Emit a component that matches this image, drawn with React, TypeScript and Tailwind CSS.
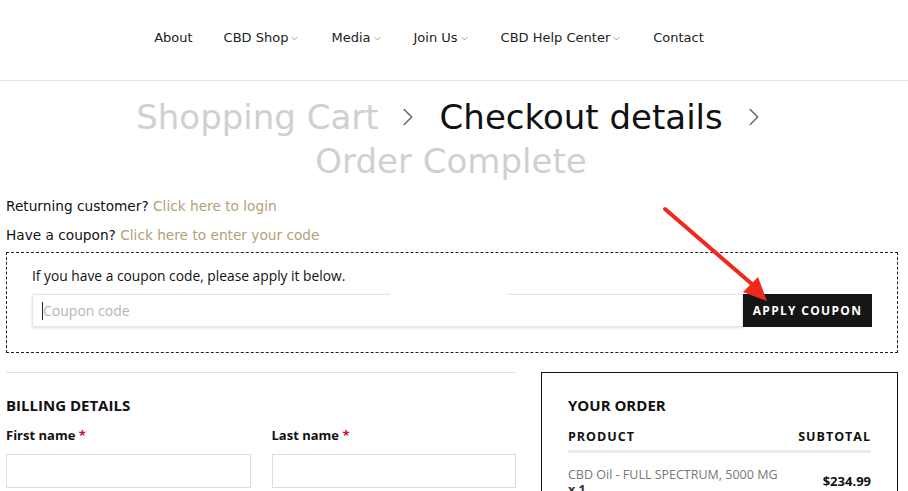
import React from 'react';
import { ChevronDown, ChevronRight } from 'lucide-react';

const navItems = [
  { label: 'About', drop: false },
  { label: 'CBD Shop', drop: true },
  { label: 'Media', drop: true },
  { label: 'Join Us', drop: true },
  { label: 'CBD Help Center', drop: true },
  { label: 'Contact', drop: false },
];

// --- RED ANNOTATION ARROW ---
const RedArrow = () => (
  <svg className="absolute left-[655px] top-[200px] pointer-events-none" width="130" height="110" viewBox="0 0 130 110">
    <line x1="10" y1="9" x2="98" y2="85" stroke="#f0281e" strokeWidth="4" strokeLinecap="round" />
    <polygon points="112,101 88,92 103,77" fill="#f0281e" />
  </svg>
);

export default function App() {
  return (
    <div className="relative min-h-screen bg-white text-[#111] font-['Open_Sans',sans-serif] overflow-hidden">
      {/* Header */}
      <header className="h-[81px] border-b border-[#e4e4e4] flex items-center justify-center pr-[52px] pb-[4px]">
        <nav className="flex items-center gap-[31px] text-[13px] text-[#222] font-['DejaVu_Sans',sans-serif] pl-[2px]">
          {navItems.map((item) => (
            <span key={item.label} className="flex items-center gap-[1px]">
              {item.label}
              {item.drop && <ChevronDown size={11} strokeWidth={1.3} className="text-[#666]" />}
            </span>
          ))}
        </nav>
      </header>

      {/* Breadcrumb */}
      <div className="pt-[14px] pr-[6px] flex flex-col items-center text-[34px] leading-[44px] font-['DejaVu_Sans',sans-serif]">
        <div className="flex items-center ml-[3px]">
          <span className="text-[#d0d0d0]">Shopping Cart</span>
          <ChevronRight size={30} strokeWidth={1.2} className="ml-[14px] mr-[17px] text-[#666]" />
          <span className="text-[#111]">Checkout details</span>
          <ChevronRight size={30} strokeWidth={1.2} className="ml-[16px] text-[#666]" />
        </div>
        <span className="text-[#d0d0d0]">Order Complete</span>
      </div>

      {/* Notices */}
      <div className="px-[6px] pt-[9px] text-[13.7px] leading-[29px] font-['DejaVu_Sans',sans-serif]">
        <p>Returning customer? <span className="text-[#b1a275]">Click here to login</span></p>
        <p>Have a coupon? <span className="text-[#b1a275]">Click here to enter your code</span></p>
      </div>

      {/* Coupon box */}
      <div className="ml-[6px] mr-[10px] mt-[2px] h-[101px] border border-dashed border-[#222] px-[25px] pt-[13px]">
        <p className="text-[13.8px] leading-[20px]">If you have a coupon code, please apply it below.</p>
        <div className="mt-[8px] flex relative">
          <div className="flex-1 h-[33px] bg-white border border-[#e6e6e6] shadow-[0_1px_3px_rgba(0,0,0,0.12)] flex items-center px-[9px]">
            <span className="w-px h-[18px] bg-[#222]"></span>
            <span className="text-[14px] text-[#b5b5b5]">Coupon code</span>
          </div>
          <div className="absolute left-[358px] top-[-3px] w-[117px] h-[6px] bg-white"></div>
          <button className="w-[129px] h-[33px] bg-[#151515] text-white text-[12px] font-bold tracking-[1.3px]">
            APPLY COUPON
          </button>
        </div>
      </div>

      {/* Billing + Order */}
      <div className="flex pl-[6px] pt-[19px] gap-[25px]">
        <div className="w-[510px]">
          <div className="border-t border-[#e0e0e0]"></div>
          <h3 className="mt-[21px] text-[15px] font-bold leading-[22px]">BILLING DETAILS</h3>
          <div className="mt-[6px] flex gap-[21px]">
            <div className="flex-1">
              <label className="text-[13px] font-bold leading-[16px]">First name <span className="text-[#c8102e]">*</span></label>
              <div className="mt-[8px] h-[34px] border border-[#ddd]"></div>
            </div>
            <div className="flex-1">
              <label className="text-[13px] font-bold leading-[16px]">Last name <span className="text-[#c8102e]">*</span></label>
              <div className="mt-[8px] h-[34px] border border-[#ddd]"></div>
            </div>
          </div>
        </div>

        <div className="w-[357px] h-[140px] border-[1.5px] border-[#111] border-b-0 px-[26px] pt-[21px]">
          <h3 className="text-[15px] font-bold leading-[22px]">YOUR ORDER</h3>
          <div className="mt-[12px] flex justify-between text-[12.5px] font-bold tracking-[1px] leading-[18px] pb-[4px] border-b-[3px] border-[#eaeaea]">
            <span>PRODUCT</span>
            <span>SUBTOTAL</span>
          </div>
          <div className="mt-[14px] flex justify-between items-center">
            <div className="text-[12.5px] text-[#777] leading-[15px]">
              <div>CBD Oil - FULL SPECTRUM, 5000 MG</div>
              <div className="font-bold text-[#333]">x 1</div>
            </div>
            <span className="text-[13px] font-bold">$234.99</span>
          </div>
        </div>
      </div>

      <RedArrow />
    </div>
  );
}
